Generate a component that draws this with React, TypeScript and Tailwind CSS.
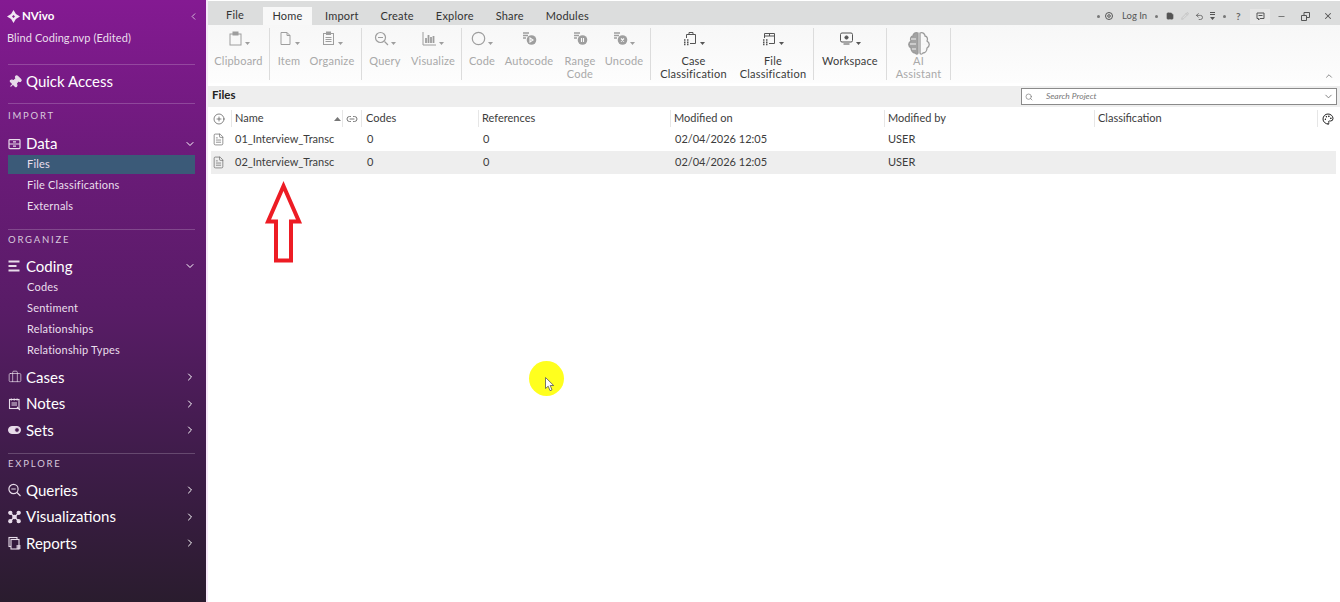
import { ChevronDown, ChevronLeft, ChevronRight, ChevronUp, Minus, X, Search, Undo2, Save, Pencil, Palette, CirclePlus, Link2, FileText, Pin, Briefcase } from "lucide-react";
import type { ReactNode } from "react";

const Caret = () => (
  <svg width="5" height="4" viewBox="0 0 5 4" className="ml-[2px] self-center">
    <path d="M0 1h5L2.500 4z" fill="currentColor" />
  </svg>
);

const icon = { width: 14, height: 14, viewBox: "0 0 14 14", fill: "none", stroke: "currentColor" };

const DataIcon = () => (
  <svg {...icon} strokeWidth="1.200">
    <rect x="1" y="2.600" width="11" height="9" rx="0.800" />
    <path d="M1 7h11M5 4.800h3M5 9.200h3" />
  </svg>
);
const CodingIcon = () => (
  <svg {...icon} strokeWidth="2">
    <path d="M0.500 2.500h11M0.500 7h8M0.500 11.500h11" />
  </svg>
);
const NotesIcon = () => (
  <svg {...icon} strokeWidth="1.100">
    <rect x="1.500" y="2.500" width="9.500" height="9" />
    <path d="M3.300 1.500v2M6.200 1.500v2M9.100 1.500v2M3.500 6h5.500M3.500 8h5.500M9 10l3 3" />
  </svg>
);
const SetsIcon = () => (
  <svg {...icon} strokeWidth="1">
    <rect x="0.500" y="3.500" width="12" height="7" rx="3.500" fill="currentColor" />
    <circle cx="9" cy="7" r="2.400" fill="#4a1c55" />
  </svg>
);
const QueriesIcon = () => (
  <svg {...icon} strokeWidth="1.200">
    <circle cx="5.500" cy="6" r="4.600" />
    <path d="M3.300 6h4.400M9 9.500l3.500 3.500" />
  </svg>
);
const VisualIcon = () => (
  <svg {...icon} strokeWidth="1.300">
    <path d="M2.500 3l8 8M10.500 3l-8 8" />
    <circle cx="2.300" cy="2.800" r="1.500" fill="currentColor" />
    <circle cx="10.700" cy="2.800" r="1.500" fill="currentColor" />
    <circle cx="2.300" cy="11.200" r="1.500" fill="currentColor" />
    <circle cx="10.700" cy="11.200" r="1.500" fill="currentColor" />
    <circle cx="6.500" cy="7" r="1.700" fill="currentColor" />
  </svg>
);
const ReportsIcon = () => (
  <svg {...icon} strokeWidth="1.100">
    <rect x="1" y="1.500" width="8" height="9" />
    <rect x="3" y="3.500" width="8" height="9.500" fill="#33193c" />
    <path d="M8.500 10h4M8.500 12h4" strokeWidth="1.400" />
  </svg>
);

function SideRow({ label, glyph, open, top = 0, h = "h-[26.5px]" }: { label: string; glyph: ReactNode; open?: boolean; top?: number; h?: string }) {
  return (
    <div className={`${h} ${top ? "pt-[5px]" : ""} flex items-center pl-[8px] pr-[10px] text-white`}>
      <span className="w-[18px] text-[#e8dcea]">{glyph}</span>
      <span className="flex-1 text-[15px] leading-none">{label}</span>
      {open ? <ChevronDown size={12} strokeWidth={2} /> : <ChevronRight size={12} strokeWidth={2} />}
    </div>
  );
}

function SubRow({ label, active }: { label: string; active?: boolean }) {
  return (
    <div className="h-[21px] flex items-center px-[8px] pr-[11px]">
      <div className={`h-[18.500px] w-full flex items-center pl-[19px] text-[11px] tracking-[0.2px] text-[#eadfec] ${active ? "bg-[#3b5a78]" : ""}`}>{label}</div>
    </div>
  );
}

const Divider = () => <div className="ml-[8px] mr-[11px] h-px bg-white/20" />;

function Sidebar() {
  return (
    <aside className="w-[206px] shrink-0 h-[602px] bg-[linear-gradient(180deg,#841a92_0%,#6a1b78_28%,#581c66_52%,#3f1c4a_76%,#2a1c2e_100%)]">
      <div className="h-[64px] pt-[7px] pl-[7px] pr-[7px]">
        <div className="h-[18px] flex items-center text-white">
          <svg width="13" height="13" viewBox="0 0 13 13" className="mr-[2px]">
            <path d="M6.500 0l2.400 4.100 4.100 2.400-4.100 2.400-2.400 4.100-2.400-4.100L0 6.500l4.100-2.400z" fill="#f1e6f3" />
            <path d="M6.500 5l1.500 1.500-1.500 1.500-1.500-1.500z" fill="#841a92" />
          </svg>
          <span className="flex-1 text-[11.500px] font-bold">NVivo</span>
          <ChevronLeft size={11} className="text-[#d8c3dc]" />
        </div>
        <div className="mt-[4px] h-[18px] flex items-center text-[11px] tracking-[0.1px] text-[#eadfec]">Blind Coding.nvp (Edited)</div>
      </div>
      <Divider />
      <div className="h-[38px] pb-[5px] flex items-center pl-[8px] text-white">
        <span className="w-[18px]"><Pin size={14} fill="currentColor" className="rotate-45 text-[#e8dcea]" /></span>
        <span className="text-[15px]">Quick Access</span>
      </div>
      <Divider />
      <div className="h-[24px] flex items-center px-[8px] text-[9.500px] tracking-[0.19em] text-[#d9c9dd]">IMPORT</div>
      <SideRow label="Data" glyph={<DataIcon />} open top={1} h="h-[26px]" />
      <SubRow label="Files" active />
      <SubRow label="File Classifications" />
      <SubRow label="Externals" />
      <div className="h-[12px]" />
      <Divider />
      <div className="h-[20px] flex items-center px-[8px] text-[9.500px] tracking-[0.19em] text-[#d9c9dd]">ORGANIZE</div>
      <SideRow label="Coding" glyph={<CodingIcon />} open top={1} h="h-[27px]" />
      <SubRow label="Codes" />
      <SubRow label="Sentiment" />
      <SubRow label="Relationships" />
      <SubRow label="Relationship Types" />
      <div className="h-[3px]" />
      <SideRow label="Cases" glyph={<Briefcase size={14} strokeWidth={1.200} />} />
      <SideRow label="Notes" glyph={<NotesIcon />} />
      <SideRow label="Sets" glyph={<SetsIcon />} />
      <div className="h-[9.500px]" />
      <Divider />
      <div className="h-[19.500px] flex items-center px-[8px] text-[9.500px] tracking-[0.19em] text-[#d9c9dd]">EXPLORE</div>
      <div className="h-[3.500px]" />
      <SideRow label="Queries" glyph={<QueriesIcon />} />
      <SideRow label="Visualizations" glyph={<VisualIcon />} />
      <SideRow label="Reports" glyph={<ReportsIcon />} />
    </aside>
  );
}

const r = { width: 15, height: 15, viewBox: "0 0 15 15", fill: "none", stroke: "currentColor", strokeWidth: 1 };
const ClipboardI = () => (
  <svg {...r}><rect x="2" y="3" width="11" height="11" /><rect x="5" y="1" width="5" height="3" fill="currentColor" /></svg>
);
const ItemI = () => (
  <svg {...r}><path d="M3 1.500h6l3 3v9H3z" /><path d="M9 1.500v3h3" /></svg>
);
const OrganizeI = () => (
  <svg {...r}><rect x="2.500" y="2.500" width="10" height="11" /><rect x="5.500" y="1" width="4" height="2.500" fill="currentColor" /><path d="M4.500 6.500h6M4.500 8.500h6M4.500 10.500h6" /></svg>
);
const QueryI = () => (
  <svg {...r} strokeWidth="1.200"><circle cx="6.500" cy="6.500" r="5" /><path d="M4 6.500h5M10.500 10.500l3.500 3.500" /></svg>
);
const VisI = () => (
  <svg {...r} strokeWidth="1"><path d="M1 1v13h13" /><path d="M4 12V7M6.500 12V4M9 12V6M11.500 12V5" strokeWidth="1.800" /></svg>
);
const CodeI = () => (
  <svg {...r} strokeWidth="1.200"><circle cx="7.500" cy="7.500" r="6.200" /></svg>
);
const Coded = ({ mark }: { mark: string }) => (
  <svg {...r} strokeWidth="1.300">
    <path d="M1 2h6M1 4.500h5M1 7h3" />
    <circle cx="9.500" cy="9" r="4.800" fill="currentColor" stroke="none" />
    <path d={mark} stroke="#fafafa" strokeWidth="1.100" />
  </svg>
);
const CaseI = () => (
  <svg {...r}><path d="M6 3.500V1.500h4v2M3.500 7V3.500h9v9H7" /><path d="M1 9h1.500M4 9h1.500M1 11.200h1.500M4 11.200h1.500M1 13.400h1.500M4 13.400h1.500" strokeWidth="1.600" /></svg>
);
const FileClassI = () => (
  <svg {...r}><path d="M2.500 7V2.500h10v10H7M2.500 5h10M7.500 2.500V5" /><path d="M1 9h1.500M4 9h1.500M1 11.200h1.500M4 11.200h1.500M1 13.400h1.500M4 13.400h1.500" strokeWidth="1.600" /></svg>
);
const WorkI = () => (
  <svg {...r}><rect x="1.500" y="2" width="12" height="9" rx="1.500" /><circle cx="7.500" cy="6.500" r="1.600" fill="currentColor" /><path d="M4.500 13h6" /></svg>
);
const BrainI = () => (
  <svg width="24" height="25" viewBox="0 0 24 25" fill="none" stroke="#9a9a9a" strokeWidth="1.300">
    <path d="M11 2C8 1 6 3 6 5 3.500 5.500 3 8 4 10c-3 2-3 5 0 7 0 3 2 5 4 5 1 1.500 3 1.500 3 0z" fill="#a3a3a3" />
    <path d="M13 2c3-1 5 1 5 3 2.500.5 3 3 2 5 3 2 3 5 0 7 0 3-2 5-4 5-1 1.500-3 1.500-3 0z" />
    <path d="M4 8h5M3 13h6M5 18h4M15 8h4M15 13h6M15 18h4" stroke="#f4f4f4" strokeWidth="1" />
  </svg>
);

type Item = { w: number; label: ReactNode; glyph: ReactNode; caret?: boolean; dark?: boolean };

function RibbonGroup({ items, w }: { items: Item[]; w: number }) {
  return (
    <div style={{ width: w }} className="flex h-[52px] mt-[3px] border-r border-[#dcdcdc]">
      {items.map((it, i) => (
        <div key={i} style={{ width: it.w }} className={`flex flex-col items-center text-[11px] leading-[13px] tracking-[0.2px] ${it.dark ? "text-[#3a3a3a]" : "text-[#a9a9a9]"}`}>
          <div className={`h-[26px] pt-[3px] flex ${it.dark ? "text-[#555]" : "text-[#9e9e9e]"}`}>
            {it.glyph}
            {it.caret && <Caret />}
          </div>
          <div className="text-center whitespace-nowrap">{it.label}</div>
        </div>
      ))}
    </div>
  );
}

const groups: { w: number; items: Item[] }[] = [
  { w: 62, items: [{ w: 61, label: "Clipboard", glyph: <ClipboardI />, caret: true }] },
  { w: 92, items: [{ w: 38, label: "Item", glyph: <ItemI />, caret: true }, { w: 48, label: "Organize", glyph: <OrganizeI />, caret: true }] },
  { w: 100, items: [{ w: 46, label: "Query", glyph: <QueryI />, caret: true }, { w: 50, label: "Visualize", glyph: <VisI />, caret: true }] },
  {
    w: 189,
    items: [
      { w: 40, label: "Code", glyph: <CodeI />, caret: true },
      { w: 54, label: "Autocode", glyph: <Coded mark="M8 7l3 2-3 2z" /> },
      { w: 48, label: <>Range<br />Code</>, glyph: <Coded mark="M8.500 7v4M10.500 7v4" /> },
      { w: 40, label: "Uncode", glyph: <Coded mark="M8 7.500l3 3M11 7.500l-3 3" />, caret: true },
    ],
  },
  {
    w: 163,
    items: [
      { w: 85, label: <>Case<br />Classification</>, glyph: <CaseI />, caret: true, dark: true },
      { w: 74, label: <>File<br />Classification</>, glyph: <FileClassI />, caret: true, dark: true },
    ],
  },
  { w: 73, items: [{ w: 76, label: "Workspace", glyph: <WorkI />, caret: true, dark: true }] },
  { w: 64, items: [{ w: 63, label: <>AI<br />Assistant</>, glyph: <BrainI /> }] },
];

const Dot = ({ className = "" }: { className?: string }) => <span className={`h-[3px] w-[3px] rounded-full bg-[#777] ${className}`} />;

function TitleTools() {
  return (
    <div className="ml-auto flex items-center h-full pt-[6px] pr-[7px] text-[#555]">
      <Dot />
      <svg width="8" height="8" viewBox="0 0 8 8" fill="none" stroke="currentColor" className="ml-[5px]"><circle cx="4" cy="4" r="3.500" /><circle cx="4" cy="4" r="1.300" /></svg>
      <span className="ml-[9px] w-[23px] whitespace-nowrap text-[9.500px] tracking-normal">Log In</span>
      <Dot className="ml-[10px]" />
      <Save size={8} fill="currentColor" className="ml-[8px]" />
      <Pencil size={8} className="ml-[7px] text-[#bbb]" />
      <Undo2 size={9} className="ml-[6px]" />
      <svg width="5" height="8" viewBox="0 0 5 8" className="ml-[6px]" fill="currentColor"><path d="M0 0h5v1H0zM0 2h5v1H0zM0 5h5L2.500 8z" /></svg>
      <Dot className="ml-[8px]" />
      <span className="ml-[10px] w-[6px] text-[10px] font-bold text-[#666]">?</span>
      <span className="ml-[8px] flex h-[15px] w-[20px] items-center justify-center bg-[#e6e6e6]">
        <svg width="9" height="9" viewBox="0 0 9 9" fill="none" stroke="currentColor"><path d="M1 1h7v5.500H4L2.500 8V6.500H1zM2.500 3.500h4" /></svg>
      </span>
      <Minus size={9} className="ml-[7px]" />
      <svg width="9" height="9" viewBox="0 0 9 9" fill="none" stroke="currentColor" className="ml-[15px]"><path d="M.5 3.500h5v5h-5zM3 3.500v-3h5.500v5h-3" /></svg>
      <X size={10} strokeWidth={2.500} className="ml-[13px]" />
    </div>
  );
}

const cols = "grid grid-cols-[20px_111px_19px_117px_192px_214px_210px_223px_19px]";

function HeadCell({ children, className = "" }: { children?: ReactNode; className?: string }) {
  return <div className={`border-l border-[#e6e6e6] h-[17px] flex items-center pl-[3px] ${className}`}>{children}</div>;
}

function FileRow({ name, shade }: { name: string; shade?: boolean }) {
  return (
    <div className={`${cols} h-[23px] items-center text-[11px] text-[#3c3c3c] ${shade ? "bg-[#eeeeee]" : ""}`}>
      <FileText size={13} strokeWidth={1.300} className="ml-[1px] text-[#666]" />
      <div className="pl-[4px] col-span-2 whitespace-nowrap">{name}</div>
      <div className="pl-[6px]">0</div>
      <div className="pl-[5px]">0</div>
      <div className="pl-[5px]">02/04/2026 12:05</div>
      <div className="pl-[4px]">USER</div>
    </div>
  );
}

function Main() {
  return (
    <main className="flex-1 border-l-2 border-[#f7e8f9] min-w-0">
      <div className="h-[24px] mt-px bg-[#dcdddd] flex items-end text-[11px] tracking-[0.2px] text-[#333]">
        <div className="h-full w-[55px] pl-[18px] pt-[4px] flex items-center">File</div>
        <div className="h-[18px] w-[49px] bg-[#f8f8f8] flex items-center justify-center">Home</div>
        <div className="h-full pt-[6px] flex items-center gap-[22px] ml-[13px]">
          <span>Import</span>
          <span>Create</span>
          <span>Explore</span>
          <span>Share</span>
          <span>Modules</span>
        </div>
        <TitleTools />
      </div>
      <div className="relative h-[58px] bg-[linear-gradient(180deg,#f7f7f7,#fdfdfd)] flex">
        {groups.map((g, i) => (
          <RibbonGroup key={i} w={g.w} items={g.items} />
        ))}
        <ChevronUp size={10} strokeWidth={2} className="absolute right-[6px] bottom-[2px] text-[#777]" />
      </div>
      <div className="h-[3px]" />
      <div className="h-[21px] bg-[#eeeeee] flex items-center pl-[4px] pr-[3px]">
        <span className="flex-1 mb-[3px] text-[11.500px] font-bold text-[#222]">Files</span>
        <div className="h-[17px] w-[316px] bg-white border border-[#8a8a8a] flex items-center pl-[3px] pr-[2px] text-[#777]">
          <Search size={8} />
          <span className="ml-[13px] flex-1 text-[8.500px] italic">Search Project</span>
          <ChevronDown size={11} />
        </div>
      </div>
      <div className="ml-[3px] mr-[4px]">
        <div className={`${cols} h-[21px] pt-[2px] items-center text-[11px] text-[#3c3c3c]`}>
          <CirclePlus size={12} strokeWidth={1.300} className="ml-[2px] text-[#444]" />
          <HeadCell className="justify-between pl-[1px] pr-[1px]">
            <span>Name</span>
            <svg width="7" height="4" viewBox="0 0 7 4" fill="#777"><path d="M3.500 0L7 4H0z" /></svg>
          </HeadCell>
          <HeadCell className="pl-0"><Link2 size={12} className="text-[#777]" /></HeadCell>
          <HeadCell className="pl-[4px]">Codes</HeadCell>
          <HeadCell>References</HeadCell>
          <HeadCell>Modified on</HeadCell>
          <HeadCell>Modified by</HeadCell>
          <HeadCell>Classification</HeadCell>
          <HeadCell className="pl-[4px]"><Palette size={12} strokeWidth={2} className="text-[#222]" /></HeadCell>
        </div>
        <FileRow name="01_Interview_Transc" />
        <FileRow name="02_Interview_Transc" shade />
      </div>
    </main>
  );
}

export default function App() {
  return (
    <div className="relative flex h-[602px] w-[1340px] overflow-hidden bg-white font-['Lato',sans-serif]">
      <Sidebar />
      <Main />
      {/* annotation arrow and cursor highlight sit over the page */}
      <svg width="40" height="84" viewBox="0 0 40 84" className="absolute left-[264px] top-[181px]" fill="none" stroke="#ed1c24" strokeWidth="4">
        <path d="M19.500 5L35 40.500H27V79.500H12V40.500H4z" />
      </svg>
      <div className="absolute left-[529px] top-[361px] h-[35px] w-[35px] rounded-full bg-[#ffff1e]" />
      <svg width="10" height="15" viewBox="0 0 10 15" className="absolute left-[545px] top-[377px]" fill="#fff" stroke="#555" strokeWidth="0.800">
        <path d="M.5.500v11l2.700-2.300 1.800 4.500 2-.8-1.800-4.400h3.500z" />
      </svg>
    </div>
  );
}
